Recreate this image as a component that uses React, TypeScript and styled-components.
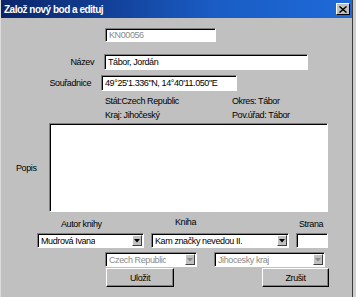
import React from 'react';
import styled, { createGlobalStyle } from 'styled-components';

const GlobalStyle = createGlobalStyle`
  html, body {
    margin: 0;
    padding: 0;
    background: #cfcfcf;
  }
  * {
    box-sizing: border-box;
  }
`;

const font = `"Liberation Sans", Arial, sans-serif`;

const Window = styled.div`
  width: 353px;
  height: 297px;
  background: #c0c0c0;
  border-left: 1px solid #dcdcdc;
  border-right: 1px solid #3c3c3c;
  display: flex;
  flex-direction: column;
  font-family: ${font};
  font-size: 9px;
  letter-spacing: -0.4px;
  color: #000;
`;

const TitleBar = styled.div`
  height: 18px;
  background: linear-gradient(90deg, #0a246a 0%, #1a5cc4 60%, #1e6ad8 100%);
  display: flex;
  align-items: center;
  justify-content: space-between;
  padding: 0 2px 0 3px;
`;

const Title = styled.span`
  color: #fff;
  font-weight: bold;
  font-size: 10px;
  letter-spacing: -0.5px;
`;

const CloseButton = styled.div`
  width: 14px;
  height: 12px;
  background: #c0c0c0;
  border: 1px solid;
  border-color: #fff #000 #000 #fff;
  display: flex;
  align-items: center;
  justify-content: center;
`;

const Row = styled.div<{ $top: number; $left?: number; $gap?: number }>`
  display: flex;
  align-items: center;
  margin-top: ${(p) => p.$top}px;
  padding-left: ${(p) => p.$left ?? 0}px;
  gap: ${(p) => p.$gap ?? 0}px;
`;

const Label = styled.div<{ $width: number }>`
  width: ${(p) => p.$width}px;
  text-align: right;
  padding-right: 10px;
  white-space: nowrap;
`;

const Field = styled.div<{ $width: number; $height: number; $muted?: boolean }>`
  width: ${(p) => p.$width}px;
  height: ${(p) => p.$height}px;
  background: #fff;
  border: 1px solid;
  border-color: #808080 #fff #fff #808080;
  box-shadow: inset 1px 1px 0 #000;
  color: ${(p) => (p.$muted ? '#8a8a8a' : '#000')};
  padding: 0 2px 0 3px;
  display: flex;
  align-items: center;
  white-space: nowrap;
  overflow: hidden;
`;

const InfoGrid = styled.div`
  display: grid;
  grid-template-columns: 127px auto;
  grid-auto-rows: 14px;
  align-items: center;
  margin-top: 3px;
  padding-left: 104px;
`;

const Memo = styled(Field)`
  align-items: flex-start;
`;

const SideLabel = styled.div`
  width: 33px;
`;

const Caption = styled.div<{ $width: number; $lift?: number }>`
  width: ${(p) => p.$width}px;
  height: 14px;
  line-height: 14px;
  white-space: nowrap;
  transform: translateY(${(p) => -(p.$lift ?? 0)}px);
`;

const Select = styled(Field)`
  padding-right: 1px;
  justify-content: space-between;
`;

const SelectText = styled.span`
  overflow: hidden;
`;

const ArrowButton = styled.div<{ $disabled?: boolean }>`
  width: 10px;
  height: 11px;
  background: #c0c0c0;
  border: 1px solid;
  border-color: #fff #404040 #404040 #fff;
  display: flex;
  align-items: center;
  justify-content: center;
  flex-shrink: 0;
  svg path {
    fill: ${(p) => (p.$disabled ? '#8a8a8a' : '#000')};
  }
`;

const Button = styled.div<{ $width: number }>`
  width: ${(p) => p.$width}px;
  height: 19px;
  background: #c0c0c0;
  border: 1px solid;
  border-color: #fff #000 #000 #fff;
  box-shadow: inset -1px -1px 0 #808080;
  display: flex;
  align-items: center;
  justify-content: center;
`;

const Arrow = () => (
  <svg width="6" height="4" viewBox="0 0 6 4">
    <path d="M0 0H6L3 3.5Z" />
  </svg>
);

const Dropdown = ({
  width,
  text,
  disabled,
}: {
  width: number;
  text: string;
  disabled?: boolean;
}) => (
  <Select $width={width} $height={15} $muted={disabled}>
    <SelectText>{text}</SelectText>
    <ArrowButton $disabled={disabled}>
      <Arrow />
    </ArrowButton>
  </Select>
);

export default function App() {
  return (
    <>
      <GlobalStyle />
      <Window>
        <TitleBar>
          <Title>Založ nový bod a edituj</Title>
          <CloseButton>
            <svg width="8" height="7" viewBox="0 0 8 7">
              <path d="M1 0L4 2.6L7 0L8 1L5 3.5L8 6L7 7L4 4.4L1 7L0 6L3 3.5L0 1Z" fill="#000" />
            </svg>
          </CloseButton>
        </TitleBar>

        <Row $top={10} $left={104}>
          <Field $width={111} $height={14} $muted>
            KN00056
          </Field>
        </Row>

        <Row $top={12}>
          <Label $width={103}>Název</Label>
          <Field $width={204} $height={16}>
            Tábor, Jordán
          </Field>
        </Row>

        <Row $top={5}>
          <Label $width={100}>Souřadnice</Label>
          <Field $width={136} $height={16}>
            49°25'1.336"N, 14°40'11.050"E
          </Field>
        </Row>

        <InfoGrid>
          <span>Stát:Czech Republic</span>
          <span>Okres: Tábor</span>
          <span>Kraj: Jihočeský</span>
          <span>Pov.úřad: Tábor</span>
        </InfoGrid>

        <Row $top={1} $left={15}>
          <SideLabel>Popis</SideLabel>
          <Memo $width={279} $height={89} />
        </Row>

        <Row $top={5} $left={60}>
          <Caption $width={114}>Autor knihy</Caption>
          <Caption $width={124} $lift={2}>
            Kniha
          </Caption>
          <Caption $width={40}>Strana</Caption>
        </Row>

        <Row $top={2} $left={36} $gap={7}>
          <Dropdown width={107} text="Mudrová Ivana" />
          <Dropdown width={138} text="Kam značky nevedou II." />
          <Field $width={32} $height={15} />
        </Row>

        <Row $top={4} $left={104} $gap={17}>
          <Dropdown width={92} text="Czech Republic" disabled />
          <Dropdown width={111} text="Jihocesky kraj" disabled />
        </Row>

        <Row $top={1} $left={105} $gap={88}>
          <Button $width={68}>Uložit</Button>
          <Button $width={67}>Zrušit</Button>
        </Row>
      </Window>
    </>
  );
}
